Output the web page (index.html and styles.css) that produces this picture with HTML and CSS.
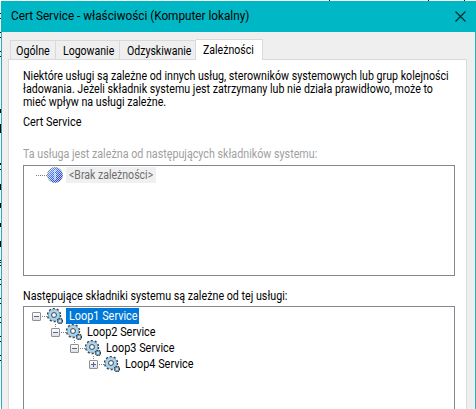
FILE: index.html
```html
<!DOCTYPE html>
<html lang="pl">
<head>
<meta charset="utf-8">
<title>Cert Service - właściwości</title>
<link rel="stylesheet" href="styles.css">
</head>
<body>
<svg width="0" height="0" class="defs">
  <symbol id="gear" viewBox="0 0 16 16">
    <circle cx="7" cy="7" r="6.100" fill="none" stroke="#36444f" stroke-width="2.200" stroke-dasharray="2 1.830"/>
    <circle cx="7" cy="7" r="4.200" fill="none" stroke="#6f93ab" stroke-width="3.800"/>
    <circle cx="7" cy="7" r="4.100" fill="none" stroke="#a9d2ec" stroke-width="2.800"/>
    <circle cx="7" cy="7" r="2.400" fill="#fff" stroke="#3e4c58" stroke-width="1"/>
    <circle cx="13" cy="13" r="2.500" fill="#9cc5dd" stroke="#2b3f4e" stroke-width="1.500" stroke-dasharray="1.4 .6"/>
    <circle cx="13" cy="13" r=".8" fill="#fff"/>
  </symbol>
</svg>
<div class="backdrop">
<main class="dialog">
  <header class="titlebar">
    <span class="text title">Cert Service - właściwości (Komputer lokalny)</span>
    <svg class="close" width="11" height="11" viewBox="0 0 11 11"><path d="M.5.5l10 10M10.500.5l-10 10" stroke="#062426" stroke-width="1.1"/></svg>
  </header>
  <nav class="tabs">
    <div class="tab general"><span class="text wide">Ogólne</span></div>
    <div class="tab logon"><span class="text narrow">Logowanie</span></div>
    <div class="tab recovery"><span class="text narrow">Odzyskiwanie</span></div>
    <div class="tab selected"><span class="text narrow">Zależności</span></div>
  </nav>
  <section class="panel">
    <p class="intro">
      <span class="text">Niektóre usługi są zależne od innych usług, sterowników systemowych lub grup kolejności</span>
      <span class="text">ładowania. Jeżeli składnik systemu jest zatrzymany lub nie działa prawidłowo, może to</span>
      <span class="text">mieć wpływ na usługi zależne.</span>
    </p>
    <p class="name"><span class="text service">Cert Service</span></p>
    <p class="label disabled"><span class="text long">Ta usługa jest zależna od następujących składników systemu:</span></p>
    <div class="tree depends">
      <div class="row"><i class="line"></i>
        <svg class="icon" width="16" height="16" viewBox="0 0 16 16">
          <defs>
            <pattern id="dither" width="2" height="2" patternUnits="userSpaceOnUse"><path d="M0 0h1v1h-1zM1 1h1v1h-1z" fill="#fff"/></pattern>
            <linearGradient id="blue" x2="1" y2="1"><stop stop-color="#86b0f4"/><stop offset=".5" stop-color="#3468f0"/><stop offset="1" stop-color="#1018b8"/></linearGradient>
          </defs>
          <circle cx="8" cy="8" r="7.600" fill="url(#blue)" stroke="#555" stroke-width=".6"/>
          <path d="M7 3h2v2H7zM7 6h2v7H7z" fill="#e4ecff" opacity=".6"/>
          <rect width="16" height="16" fill="url(#dither)" opacity=".75" shape-rendering="crispEdges"/>
        </svg>
        <span class="item muted"><span class="text narrow">&lt;Brak zależności&gt;</span></span>
      </div>
    </div>
    <p class="label second"><span class="text long">Następujące składniki systemu są zależne od tej usługi:</span></p>
    <div class="tree dependents">
      <div class="row"><i class="box"></i><i class="dots"></i><svg class="icon" width="16" height="16"><use href="#gear"/></svg><span class="item active"><span class="text service">Loop1 Service</span></span></div>
      <div class="row child l2"><i class="box"></i><i class="dots"></i><svg class="icon" width="16" height="16"><use href="#gear"/></svg><span class="item"><span class="text service">Loop2 Service</span></span></div>
      <div class="row child l3"><i class="box"></i><i class="dots"></i><svg class="icon" width="16" height="16"><use href="#gear"/></svg><span class="item"><span class="text service">Loop3 Service</span></span></div>
      <div class="row child l4"><i class="box plus"></i><i class="dots"></i><svg class="icon" width="16" height="16"><use href="#gear"/></svg><span class="item"><span class="text service">Loop4 Service</span></span></div>
    </div>
  </section>
</main>
</div>
</body>
</html>
```
FILE: styles.css
```css
* { box-sizing: border-box; }
body { margin: 0; width: 476px; height: 409px; overflow: hidden; font: 12px/13px Roboto, "Liberation Sans", sans-serif; color: #000; }
p { margin: 0; }
.defs { position: absolute; }

/* The window behind shows through as a one-pixel edge at the top and left */
.backdrop {
  height: 409px;
  padding: 1px 0 0 1px;
  background:
    linear-gradient(#111, #111) 329px 0 / 1px 1px no-repeat,
    linear-gradient(#111, #111) 428px 0 / 1px 1px no-repeat,
    linear-gradient(#111, #111) 464px 0 / 1px 1px no-repeat,
    linear-gradient(#fff 13px, #111 13px 14px, #fff 14px 18px, #111 18px 19px, #fff 19px 32px, #111 32px 33px, #fff 33px 37px, #111 37px 38px, #fff 38px 51px, #111 51px 52px, #fff 52px 56px, #111 56px 57px, #fff 57px 109px, #000 109px 113px, #fff 113px 124px, #000 124px 133px, #fff 133px 163px, #000 163px 165px, #fff 165px 169px, #000 169px 170px, #fff 170px 184px, #000 184px 190px, #fff 190px 203px, #000 203px 208px, #fff 208px 223px, #000 223px 227px, #fff 227px 241px, #000 241px 247px, #fff 247px 260px, #000 260px 261px, #fff 261px 262px, #000 262px 263px, #fff 263px 265px, #000 265px 266px, #fff 266px 279px, #000 279px 280px, #fff 280px 284px, #000 284px 285px, #fff 285px 298px, #000 298px 299px, #fff 299px 303px, #000 303px 304px, #fff 304px 317px, #000 317px 318px, #fff 318px 322px, #000 322px 323px, #fff 323px 336px, #000 336px 337px, #fff 337px 341px, #000 341px 342px, #fff 342px 355px, #000 355px 356px, #fff 356px 360px, #000 360px 361px, #fff 361px) 0 0 / 1px 409px no-repeat,
    #fff;
}
.dialog { height: 408px; border: solid #28b0bd; border-width: 0 1px; background: #efefef; }

/* Condensed interface lettering */
.text { display: inline-block; white-space: nowrap; transform: scaleX(.889); transform-origin: 0 50%; }
.title { transform: scaleX(.979); }
.wide { transform: scaleX(.895); }
.long { transform: scaleX(.893); }
.narrow { transform: scaleX(.878); }
.service { transform: scaleX(.906); }

.titlebar { height: 31px; background: #00b7c5; margin: 0 -1px; padding: 9px 0 0 10px; display: flex; justify-content: space-between; }
.close { margin: 1px 10px 0 0; }
.tabs { height: 27px; padding: 7px 0 0 8px; display: flex; align-items: flex-end; }
.tab { height: 19px; border: 1px solid #d9d9d9; border-width: 1px 1px 0 0; padding: 4px 0 0 7px; }
.general { width: 46px; border-left-width: 1px; padding-left: 5px; }
.logon { width: 64px; }
.recovery { width: 76px; }
.selected { width: 67px; height: 21px; margin-bottom: -1px; position: relative; z-index: 1; background: #fff; }
.panel { margin: 0 8px 0 6px; height: 350px; border: 1px solid #d9d9d9; border-bottom: 0; background: #fff; padding: 10px 11px 0 14px; overflow: hidden; }
.intro { display: flex; flex-direction: column; align-items: flex-start; }
.name { margin-top: 7px; }
.label { height: 13px; }
.disabled { color: #a0a0a0; margin-top: 19px; }
.tree { width: 432px; border: 1px solid #828790; background: #fff; padding: 1px 0 0 8px; }
.depends { height: 111px; margin-top: 4px; }
.second { margin-top: 14px; }
.dependents { height: 110px; margin-top: 3px; }
.row { height: 16px; display: flex; align-items: center; }
.line { width: 11px; margin: 0 0 0 4px; height: 1px; background: repeating-linear-gradient(90deg, #808080 0 1px, #fff 1px 2px); }
.icon { flex: none; }
.item { height: 16px; margin-left: 3px; padding: 2px 2px 0 3px; white-space: nowrap; }
.child .item { padding-left: 2px; }
.muted { width: 90px; background: #f0f0f0; color: #6d6d6d; }
.active { width: 73px; background: #0078d7; color: #fff; }
.box { position: relative; width: 9px; height: 9px; border: 1px solid #919191; border-radius: 1px; background: linear-gradient(#4b63a7, #4b63a7) center / 5px 1px no-repeat, linear-gradient(#fff, #dedede); }
.plus { background: linear-gradient(#4b63a7, #4b63a7) center / 5px 1px no-repeat, linear-gradient(#4b63a7, #4b63a7) center / 1px 5px no-repeat, linear-gradient(#fff, #dedede); }
.child .box::before { content: ""; position: absolute; left: 3px; top: -5px; width: 1px; height: 4px; background: repeating-linear-gradient(#808080 0 1px, transparent 1px 2px); }
.dots { width: 6px; height: 1px; background: repeating-linear-gradient(90deg, transparent 0 1px, #808080 1px 2px); }
.l2 { padding-left: 19px; }
.l3 { padding-left: 38px; }
.l4 { padding-left: 57px; }
```
